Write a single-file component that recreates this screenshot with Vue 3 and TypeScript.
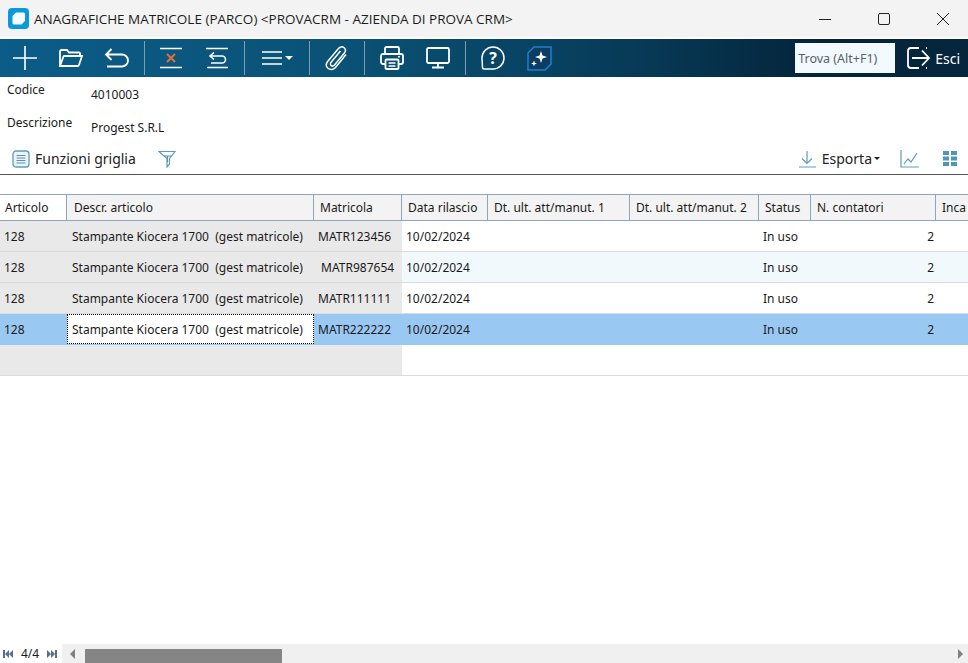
<script setup lang="ts">
interface Row { art: string; desc: string; mat: string; data: string; status: string; n: string; cls: string }
const d = 'Stampante Kiocera 1700  (gest matricole)'
const rows: Row[] = [
  { art: '128', desc: d, mat: 'MATR123456', data: '10/02/2024', status: 'In uso', n: '2', cls: '' },
  { art: '128', desc: d, mat: ' MATR987654', data: '10/02/2024', status: 'In uso', n: '2', cls: 'alt' },
  { art: '128', desc: d, mat: 'MATR111111', data: '10/02/2024', status: 'In uso', n: '2', cls: '' },
  { art: '128', desc: d, mat: 'MATR222222', data: '10/02/2024', status: 'In uso', n: '2', cls: 'sel' },
]
const heads = ['Descr. articolo', 'Matricola', 'Data rilascio', 'Dt. ult. att/manut. 1', 'Dt. ult. att/manut. 2', 'Status', 'N. contatori', 'Inca']
</script>

<template>
  <div class="app">
    <header class="titlebar">
      <svg class="logo" width="21" height="21" viewBox="0 0 21 21">
        <rect x="0" y="0" width="21" height="21" rx="4" fill="#0f97dc" />
        <path d="M8 4.5h7.5a1.5 1.5 0 0 1 1.5 1.5v7l-3.5 3.5H6a1.5 1.5 0 0 1-1.500-1.500V8z" fill="#f2fbff" />
      </svg>
      <span class="title">ANAGRAFICHE MATRICOLE (PARCO) &lt;PROVACRM - AZIENDA DI PROVA CRM&gt;</span>
      <div class="winbtns">
        <svg width="14" height="14" viewBox="0 0 14 14"><path d="M1 7.500h12" stroke="#222" stroke-width="1" /></svg>
        <svg width="14" height="14" viewBox="0 0 14 14"><rect x="1.500" y="1.500" width="11" height="11" rx="1.500" fill="none" stroke="#222" stroke-width="1" /></svg>
        <svg width="14" height="14" viewBox="0 0 14 14"><path d="M1 1l12 12M13 1L1 13" stroke="#222" stroke-width="1" /></svg>
      </div>
    </header>

    <nav class="toolbar">
      <div class="btn"><svg width="26" height="26" viewBox="0 0 26 26"><path d="M13 1v24M1 13h24" class="st" /></svg></div>
      <div class="btn"><svg width="26" height="26" viewBox="0 0 26 26"><path d="M2 21V6.500A1.500 1.500 0 0 1 3.500 5H9l2 2.500h10a1 1 0 0 1 1 1V11M2 21l3.500-9.500A1 1 0 0 1 6.500 11H24l-3 9a1.500 1.500 0 0 1-1.500 1z" class="st2" /></svg></div>
      <div class="btn"><svg width="26" height="26" viewBox="0 0 26 26"><path d="M7.500 4L2 9.500 7.500 15M2 9.500h16a5.500 5.500 0 0 1 0 12H3" class="st2" /></svg></div>
      <i class="sep first"></i>
      <div class="btn"><svg width="24" height="24" viewBox="0 0 24 24"><path d="M1 2.500h22M1 21.500h22" class="st" /><path d="M8 8l8 8M16 8l-8 8" stroke="#e0703a" stroke-width="2" fill="none" /></svg></div>
      <div class="btn"><svg width="24" height="24" viewBox="0 0 24 24"><path d="M1 2.500h22M2 21.500h21" class="st" /><path d="M9 6.500L5 10l4 3.500M5 10h12a3.500 3.500 0 0 1 0 7H6" class="st" /></svg></div>
      <i class="sep"></i>
      <div class="btn wide">
        <svg width="20" height="16" viewBox="0 0 20 16"><path d="M0 2h20M0 8h20M0 14h20" class="st" /></svg>
        <span class="caret"></span>
      </div>
      <i class="sep"></i>
      <div class="btn"><svg width="24" height="26" viewBox="0 0 24 26"><path d="M21 9.500L10.500 22.500c-2 2.500-5.500 2.500-7.500.8s-2.200-4.500-.2-7L13.500 3.500c1.500-1.800 4-2.200 5.600-.8s1.800 3.500.3 5.400L9.500 20c-.9 1.100-2.300 1.400-3.300.6s-1-2.200-.1-3.300L15.500 6" class="st15" /></svg></div>
      <i class="sep"></i>
      <div class="btn"><svg width="24" height="24" viewBox="0 0 24 24"><path d="M5 8V2.500A1.500 1.500 0 0 1 6.500 1h11A1.500 1.500 0 0 1 19 2.500V8" class="st2" /><path d="M5 18H3a2 2 0 0 1-2-2v-6a2 2 0 0 1 2-2h18a2 2 0 0 1 2 2v6a2 2 0 0 1-2 2h-2" class="st2" /><rect x="5.500" y="13.500" width="13" height="9.500" rx="1" class="st2" /><path d="M8.500 17h7M8.500 20h7" class="st" /><circle cx="19" cy="10.800" r="1" fill="#fff" /></svg></div>
      <div class="btn"><svg width="24" height="22" viewBox="0 0 24 22"><rect x="1" y="1" width="22" height="15" rx="1.500" class="st2" /><path d="M12 16v4M6 20.500h12" class="st2" /></svg></div>
      <i class="sep"></i>
      <div class="btn"><svg width="24" height="24" viewBox="0 0 24 24"><path d="M12 1a11 11 0 0 1 0 22H3a1.500 1.500 0 0 1-1.500-1.500L1 12A11 11 0 0 1 12 1z" class="st15" /></svg><span class="q">?</span></div>
      <div class="btn"><svg width="25" height="25" viewBox="0 0 25 25"><path d="M1 7L7 1h17v17l-6 6H1z" fill="#0b3d63" stroke="#1b7fd0" stroke-width="1.500" /><path d="M14 5l1.500 4.500L20 11l-4.500 1.500L14 17l-1.500-4.500L8 11l4.500-1.500zM7 14.500l.8 2.200 2.200.8-2.200.8L7 20.500l-.8-2.200-2.200-.8 2.200-.8z" fill="#fff" /></svg></div>
      <div class="spacer"></div>
      <div class="find">Trova (Alt+F1)</div>
      <div class="esci">
        <svg width="24" height="24" viewBox="0 0 24 24"><path d="M12 2H4a3 3 0 0 0-3 3v14a3 3 0 0 0 3 3h8" class="st2" /><path d="M19 2h1M19 22h1" class="st2" /><path d="M5 12h17M15 4.500l7 7.500-7 7.500" class="st2" /></svg>
        <span>Esci</span>
      </div>
    </nav>

    <section class="form">
      <div class="frow"><span class="lbl">Codice</span><span class="val">4010003</span></div>
      <div class="frow"><span class="lbl">Descrizione</span><span class="val">Progest S.R.L</span></div>
    </section>

    <section class="gridbar">
      <svg width="18" height="18" viewBox="0 0 18 18"><rect x="1" y="1" width="16" height="16" rx="3" fill="#eaf4f9" stroke="#5d9dbb" stroke-width="1.300" /><path d="M4.500 5.500h9M4.500 8h9M4.500 10.500h9M4.500 13h9" stroke="#5d8fa8" stroke-width="1" /></svg>
      <span class="gb-text">Funzioni griglia</span>
      <svg class="filter" width="18" height="18" viewBox="0 0 18 18"><path d="M1 1.500h16L11.500 8.500V14L9 17V8.500z" fill="none" stroke="#5d9dbb" stroke-width="1.200" /><path d="M6 6h7M9.500 6v6" stroke="#5d8fa8" stroke-width="1.200" /></svg>
      <div class="spacer"></div>
      <svg width="18" height="18" viewBox="0 0 18 18"><path d="M9 1v12M4 8.500l5 5 5-5M1 17h17" fill="none" stroke="#5d9dbb" stroke-width="1.200" /></svg>
      <span class="gb-text exp">Esporta</span><span class="caret dark"></span>
      <svg class="chart" width="19" height="18" viewBox="0 0 19 18"><path d="M1 0v17h18" fill="none" stroke="#5d9dbb" stroke-width="1.200" /><path d="M4 14l4-5 3 3 6-9" fill="none" stroke="#5d9dbb" stroke-width="1.200" /></svg>
      <svg class="tiles" width="14" height="15" viewBox="0 0 14 15"><path d="M0 0h6v4H0zM8 0h6v4H8zM0 5.500h6v4H0zM8 5.500h6v4H8zM0 11h6v4H0zM8 11h6v4H8z" fill="#4f97b8" /></svg>
    </section>

    <main class="grid">
      <div class="row head">
        <div class="c first-h">Articolo</div>
        <div v-for="h in heads" :key="h" class="c">{{ h }}</div>
      </div>
      <div v-for="(r, i) in rows" :key="i" class="row body" :class="r.cls">
        <div class="c fix">{{ r.art }}</div>
        <div class="c fix dsc" :class="{ focus: r.cls === 'sel' }">{{ r.desc }}</div>
        <div class="c fix mat">{{ r.mat }}</div>
        <div class="c">{{ r.data }}</div>
        <div class="c"></div>
        <div class="c"></div>
        <div class="c">{{ r.status }}</div>
        <div class="c num">{{ r.n }}</div>
        <div class="c"></div>
      </div>
      <div class="row body empty">
        <div class="c fix"></div><div class="c fix"></div><div class="c fix"></div>
      </div>
    </main>

    <footer class="foot">
      <div class="pager">
        <svg width="10" height="8" viewBox="0 0 10 8"><path d="M0 0h2v8H0zM6 0v8L2 4zM10 0v8L6 4z" fill="#55708a" /></svg>
        <span class="count">4/4</span>
        <svg width="10" height="8" viewBox="0 0 10 8"><path d="M0 0v8l4-4zM4 0v8l4-4zM8 0h2v8H8z" fill="#55708a" /></svg>
      </div>
      <div class="track">
        <span class="arrow left"></span>
        <div class="thumb"></div>
        <div class="spacer"></div>
        <span class="arrow right"></span>
      </div>
    </footer>
  </div>
</template>

<style scoped>
.app {
  width: 968px;
  height: 663px;
  display: flex;
  flex-direction: column;
  overflow: hidden;
  background: #fff;
  font-family: Tahoma, "Noto Sans", sans-serif;
  color: #1a1a1a;
}
.spacer { flex: 1; }
.titlebar {
  height: 37px;
  flex: none;
  display: flex;
  align-items: center;
  background: #f3f3f3;
  padding: 0 0 0 8px;
  margin-bottom: 2px;
}
.logo { margin-right: 5px; }
.title {
  flex: 1;
  font-family: "Open Sans", sans-serif;
  font-size: 13.500px;
  color: #1c1c1c;
  white-space: nowrap;
}
.winbtns { display: flex; gap: 45px; padding-right: 18px; }
.toolbar {
  height: 38px;
  flex: none;
  display: flex;
  align-items: center;
  padding-left: 2px;
  background: linear-gradient(90deg, #0b5c88 0%, #0a5276 35%, #073b58 65%, #04243a 85%, #05263d 100%);
}
.btn {
  width: 46px;
  height: 38px;
  flex: none;
  position: relative;
  display: flex;
  align-items: center;
  justify-content: center;
}
.btn.wide { width: 56px; justify-content: flex-start; padding-left: 13px; box-sizing: border-box; }
.st { fill: none; stroke: #fff; stroke-width: 1.600; }
.st2 { fill: none; stroke: #fff; stroke-width: 1.800; }
.st15 { fill: none; stroke: #fff; stroke-width: 1.500; }
.sep {
  width: 1px;
  height: 34px;
  margin: 0 4px;
  background: #7f9db0;
  flex: none;
}
.sep.first { margin-right: 3px; }
.caret {
  width: 0;
  height: 0;
  margin-left: 3px;
  border-left: 4px solid transparent;
  border-right: 4px solid transparent;
  border-top: 4px solid #fff;
}
.caret.dark { border-top-color: #222; border-left-width: 3px; border-right-width: 3px; border-top-width: 3px; margin-left: 2px; }
.q {
  position: absolute;
  left: 0;
  right: 0;
  top: 8px;
  text-align: center;
  color: #fff;
  font: 700 16px "Open Sans", sans-serif;
  line-height: 22px;
}
.find {
  width: 100px;
  height: 30px;
  flex: none;
  box-sizing: border-box;
  padding-left: 3px;
  display: flex;
  align-items: center;
  background: #f2faff;
  color: #55616b;
  font-family: "Noto Sans", sans-serif;
  font-size: 12.500px;
}
.esci {
  display: flex;
  align-items: center;
  gap: 4px;
  padding: 0 8px 0 12px;
  color: #fff;
  font-family: "Noto Sans", sans-serif;
  font-size: 14px;
}
.form { height: 66px; flex: none; }
.frow {
  height: 33px;
  display: flex;
  font-family: "Noto Sans", sans-serif;
  font-size: 12px;
}
.lbl { width: 84px; padding: 5px 0 0 7px; box-sizing: content-box; width: 84px; line-height: 16px; }
.val { padding-top: 10px; line-height: 16px; }
.gridbar {
  height: 32px;
  flex: none;
  box-sizing: border-box;
  border-bottom: 1px solid #555;
  display: flex;
  align-items: center;
  padding: 0 11px 0 12px;
  font-family: "Noto Sans", sans-serif;
}
.gb-text { font-size: 14px; margin-left: 5px; color: #222; }
.filter { margin-left: 22px; }
.exp { margin-left: 6px; }
.chart { margin-left: 20px; }
.tiles { margin-left: 24px; }
.grid { flex: 1; margin-top: 19px; font-family: "Noto Sans", sans-serif; font-size: 12px; }
.row {
  display: grid;
  grid-template-columns: 67px 247px 88px 86px 142px 129px 52px 125px 60px;
  width: 996px;
}
.c {
  box-sizing: border-box;
  white-space: pre;
  overflow: hidden;
  display: flex;
  align-items: center;
  padding-left: 4px;
}
.head {
  height: 25px;
  border-top: 1px solid #8ea5c0;
  border-bottom: 1px solid #8ea5c0;
  background: #f3f3f3;
}
.head .c { border-right: 1px solid #8ea5c0; padding-left: 6px; white-space: pre; }
.head .first-h { background: #fff; padding-left: 5px; }
.head .c:nth-child(2) { padding-left: 7px; }
.body { height: 31px; border-bottom: 1px solid #dcdcdc; box-sizing: border-box; }
.fix { background: #e9e9e9; }
.dsc { padding-left: 5px; }
.alt { background: #f2f9fd; }
.sel { background: #99c9f2; border-bottom-color: #99c9f2; }
.sel .fix { background: #99c9f2; }
.sel .focus { background: #fff; outline: 1px dotted #000; outline-offset: -1px; }
.num { justify-content: flex-end; padding-right: 2px; }
.foot {
  height: 19px;
  flex: none;
  display: flex;
  background: #fff;
}
.pager {
  width: 62px;
  flex: none;
  display: flex;
  align-items: center;
  padding-left: 3px;
  box-sizing: border-box;
  font-family: "Noto Sans", sans-serif;
  font-size: 12px;
}
.count { margin: 0 8px; }
.track {
  flex: 1;
  display: flex;
  align-items: center;
  background: #f0f0f0;
  height: 19px;
}
.arrow { width: 0; height: 0; border-top: 5px solid transparent; border-bottom: 5px solid transparent; }
.arrow.left { border-right: 5px solid #808080; margin-left: 8px; }
.arrow.right { border-left: 5px solid #808080; margin-right: 5px; }
.thumb { width: 197px; height: 14px; margin: 4px 0 0 10px; background: #858585; }
</style>
<style>
body { margin: 0; }
</style>
